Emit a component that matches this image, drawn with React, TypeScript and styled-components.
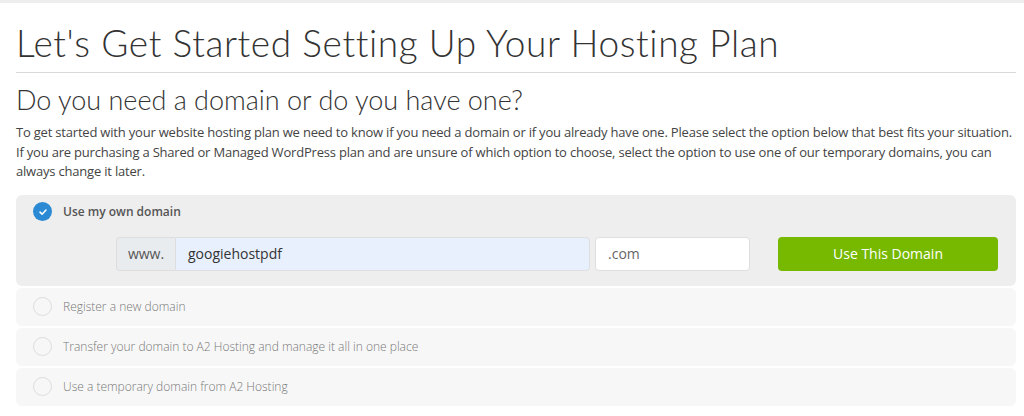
import React from 'react';
import styled, { createGlobalStyle } from 'styled-components';

const GlobalStyle = createGlobalStyle`
  body {
    margin: 0;
    background: #fff;
    font-family: "Open Sans", "Liberation Sans", sans-serif;
  }
`;

const TopBar = styled.div`
  height: 3px;
  background: #eeeeee;
`;

const Page = styled.div`
  padding: 0 8px 0 16px;
`;

const Title = styled.h1`
  margin: 0;
  padding: 21px 0 10px;
  font-family: "Lato", "Liberation Sans", sans-serif;
  font-weight: 300;
  font-size: 37px;
  line-height: 38px;
  letter-spacing: 0.6px;
  color: #333;
  border-bottom: 1px solid #d9d9d9;
`;

const SubTitle = styled.h2`
  margin: 0;
  padding-top: 11px;
  font-family: "Lato", "Liberation Sans", sans-serif;
  font-weight: 300;
  font-size: 27px;
  line-height: 32px;
  color: #333;
`;

const Intro = styled.p`
  margin: 7px 0 13px;
  font-size: 13px;
  line-height: 19.5px;
  letter-spacing: -0.2px;
  color: #444;
`;

const Options = styled.div`
  display: flex;
  flex-direction: column;
  gap: 2px;
`;

const Option = styled.div<{ $active?: boolean }>`
  background: ${(p) => (p.$active ? '#eeeeee' : '#f7f7f7')};
  border-radius: 6px;
  padding: ${(p) => (p.$active ? '4px 18px 15px 17px' : '6px 18px 6px 17px')};
`;

const OptionHead = styled.div`
  display: flex;
  align-items: center;
  gap: 11px;
  height: 26px;
`;

const Radio = styled.span<{ $checked?: boolean }>`
  box-sizing: border-box;
  width: 19px;
  height: 19px;
  border-radius: 50%;
  display: flex;
  align-items: center;
  justify-content: center;
  background: ${(p) => (p.$checked ? '#2b8ad3' : '#f7f7f7')};
  border: ${(p) => (p.$checked ? 'none' : '1.5px solid #dddddd')};
`;

const Label = styled.span<{ $active?: boolean }>`
  font-size: 12px;
  font-weight: ${(p) => (p.$active ? 600 : 300)};
  color: ${(p) => (p.$active ? '#555' : '#777')};
`;

const DomainRow = styled.div`
  display: flex;
  align-items: center;
  margin: 12px 0 0 83px;
  height: 34px;
`;

const Addon = styled.div`
  box-sizing: border-box;
  height: 34px;
  width: 59px;
  display: flex;
  align-items: center;
  justify-content: center;
  background: #e9ecef;
  border: 1px solid #dddddd;
  border-right: none;
  border-radius: 4px 0 0 4px;
  font-size: 14px;
  color: #555;
`;

const Field = styled.div<{ $w: number; $fill?: string; $round?: string; $gap?: number }>`
  box-sizing: border-box;
  height: 34px;
  width: ${(p) => p.$w}px;
  margin-left: ${(p) => p.$gap || 0}px;
  display: flex;
  align-items: center;
  padding-left: 12px;
  background: ${(p) => p.$fill || '#fff'};
  border: 1px solid #dedede;
  border-radius: ${(p) => p.$round || '4px'};
  font-size: 14px;
  color: #333;
`;

const GoButton = styled.button`
  margin-left: 28px;
  width: 220px;
  height: 34px;
  border: none;
  border-radius: 4px;
  background: #76b900;
  color: #fff;
  font-family: "Open Sans", "Liberation Sans", sans-serif;
  font-size: 14px;
  font-weight: 400;
`;

const Tick = () => (
  <svg width="10" height="10" viewBox="0 0 10 10">
    <path d="M2 5.2 L4.1 7.2 L8 3" fill="none" stroke="#fff" strokeWidth="1.6" strokeLinecap="round" strokeLinejoin="round" />
  </svg>
);

const others = [
  'Register a new domain',
  'Transfer your domain to A2 Hosting and manage it all in one place',
  'Use a temporary domain from A2 Hosting',
];

export default function App() {
  return (
    <>
      <GlobalStyle />
      <TopBar />
      <Page>
        <Title>Let's Get Started Setting Up Your Hosting Plan</Title>
        <SubTitle>Do you need a domain or do you have one?</SubTitle>
        <Intro>
          To get started with your website hosting plan we need to know if you need a domain or if you already have one. Please select the option below that best fits your situation. If you are purchasing a Shared or Managed WordPress plan and are unsure of which option to choose, select the option to use one of our temporary domains, you can always change it later.
        </Intro>
        <Options>
          <Option $active>
            <OptionHead>
              <Radio $checked>
                <Tick />
              </Radio>
              <Label $active>Use my own domain</Label>
            </OptionHead>
            <DomainRow>
              <Addon>www.</Addon>
              <Field $w={415} $fill="#e8f0fe" $round="0 4px 4px 0">googiehostpdf</Field>
              <Field $w={155} $gap={5} style={{ color: '#666' }}>.com</Field>
              <GoButton>Use This Domain</GoButton>
            </DomainRow>
          </Option>
          {others.map((t) => (
            <Option key={t}>
              <OptionHead>
                <Radio />
                <Label>{t}</Label>
              </OptionHead>
            </Option>
          ))}
        </Options>
      </Page>
    </>
  );
}
